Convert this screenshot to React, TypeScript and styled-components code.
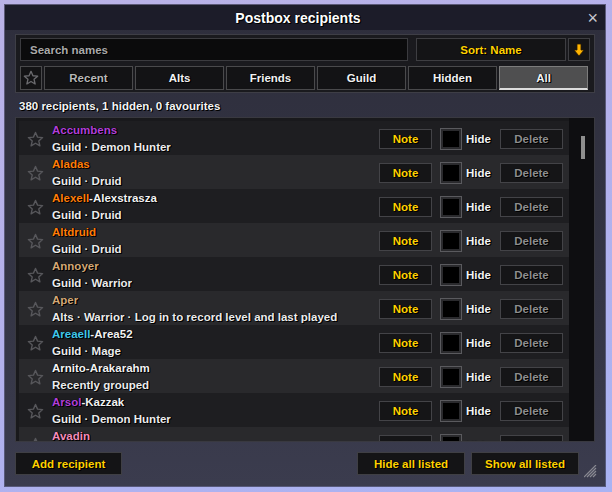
import React from "react";
import styled, { createGlobalStyle, css } from "styled-components";

const Global = createGlobalStyle`
  html, body { margin: 0; padding: 0; }
  body {
    background: linear-gradient(160deg, #bab2e6 0%, #b3b1ec 50%, #a9b3f3 100%);
    font-family: "Liberation Sans", Arial, sans-serif;
  }
  * { box-sizing: border-box; }
`;

const Page = styled.div`
  width: 612px;
  height: 492px;
  padding: 5px 0 0 5px;
`;

const Window = styled.div`
  position: relative;
  width: 600px;
  height: 481px;
  display: flex;
  flex-direction: column;
  background: linear-gradient(180deg, #2e2e3c 0%, #343545 60%, #3b3c4e 100%);
  box-shadow: 0 0 0 1px rgba(30, 30, 45, 0.6);
`;

const TitleBar = styled.div`
  position: relative;
  height: 25px;
  flex: none;
  display: flex;
  align-items: center;
  justify-content: center;
  padding-right: 14px;
  background: #1c1c29;
`;

const outline = css`
  text-shadow: 1px 1px 0 #000, 0 0 1px #000, 1px 0 0 #000;
`;

const Title = styled.div`
  color: #ffffff;
  font-weight: bold;
  font-size: 14px;
  padding-top: 1px;
  ${outline};
`;

const Close = styled.div`
  position: absolute;
  right: 7px;
  top: 3px;
  color: #c8c8d0;
  font-size: 18px;
  line-height: 20px;
`;

const Body = styled.div`
  flex: 1;
  display: flex;
  flex-direction: column;
  padding: 4px 10px 10px 10px;
`;

const TopPanel = styled.div`
  border: 1px solid #3e3e46;
  background: #1a1a1e;
  padding: 3px 4px 2px 4px;
  display: flex;
  flex-direction: column;
  gap: 5px;
`;

const SearchRow = styled.div`
  display: flex;
  height: 23px;
`;

const SearchBox = styled.div`
  width: 388px;
  background: #0b0b0c;
  border: 1px solid #3b3b3f;
  color: #a9a9a9;
  font-size: 11.5px;
  font-weight: bold;
  display: flex;
  align-items: center;
  padding-left: 9px;
  ${outline};
`;

const SortButton = styled.div`
  margin-left: 8px;
  width: 150px;
  background: #141416;
  border: 1px solid #3e3e42;
  color: #ffd100;
  font-size: 11.5px;
  font-weight: bold;
  display: flex;
  align-items: center;
  justify-content: center;
  ${outline};
`;

const ArrowButton = styled.div`
  margin-left: 2px;
  width: 22px;
  background: #141416;
  border: 1px solid #3e3e42;
  display: flex;
  align-items: center;
  justify-content: center;
`;

const TabRow = styled.div`
  display: flex;
  gap: 2px;
  height: 24px;
`;

const Tab = styled.div<{ $active?: boolean; $dim?: boolean; $w: number }>`
  width: ${(p) => p.$w}px;
  background: ${(p) => (p.$active ? "#4f4f50" : "#131315")};
  border: 1px solid ${(p) => (p.$active ? "#7c7c7c" : "#4a4a4c")};
  border-bottom: ${(p) => (p.$active ? "2px solid #dcdcdc" : "1px solid #4a4a4c")};
  color: ${(p) => (p.$dim ? "#b8b8b8" : "#f2f2f2")};
  font-size: 11.5px;
  font-weight: bold;
  display: flex;
  align-items: center;
  justify-content: center;
  ${outline};
`;

const Status = styled.div`
  height: 24px;
  flex: none;
  padding: 2px 0 0 4px;
  display: flex;
  align-items: center;
  color: #f4f4f4;
  font-size: 11.5px;
  font-weight: bold;
  ${outline};
`;

const ListBox = styled.div`
  height: 325px;
  flex: none;
  border: 1px solid #393940;
  display: flex;
  background: #19191c;
`;

const RowsArea = styled.div`
  flex: 1;
  padding: 3px 0 3px 3px;
  overflow: hidden;
  display: flex;
  flex-direction: column;
`;

const Row = styled.div<{ $alt: boolean }>`
  height: 34px;
  flex: none;
  display: flex;
  align-items: center;
  padding-right: 6px;
  background: ${(p) => (p.$alt ? "#29292c" : "#1e1e21")};
`;

const StarCell = styled.div`
  width: 33px;
  flex: none;
  display: flex;
  align-items: center;
  padding-left: 8px;
  padding-top: 2px;
`;

const Info = styled.div`
  flex: 1;
  align-self: stretch;
  display: flex;
  flex-direction: column;
  font-size: 11.5px;
  font-weight: bold;
  line-height: 17px;
  padding-top: 1px;
  ${outline};
`;

const NameLine = styled.div`
  color: #f2f2f2;
  white-space: nowrap;
`;

const Name = styled.span<{ $c: string }>`
  color: ${(p) => p.$c};
`;

const SubLine = styled.div`
  color: #ececec;
  white-space: nowrap;
`;

const NoteButton = styled.div`
  width: 53px;
  height: 20px;
  margin-top: 2px;
  background: #151517;
  border: 1px solid #434347;
  color: #ffd100;
  font-size: 11.5px;
  font-weight: bold;
  display: flex;
  align-items: center;
  justify-content: center;
  ${outline};
`;

const Check = styled.div`
  width: 22px;
  height: 22px;
  margin: 2px 0 0 8px;
  border: 1px solid #5a5a5e;
  background: #2a2a2d;
  padding: 2px;
  display: flex;
`;

const CheckInner = styled.div`
  flex: 1;
  background: #000;
`;

const HideLabel = styled.div`
  width: 34px;
  margin: 2px 0 0 4px;
  color: #f4f4f4;
  font-size: 11.5px;
  font-weight: bold;
  ${outline};
`;

const DeleteButton = styled.div`
  width: 63px;
  height: 20px;
  margin-top: 2px;
  background: #151517;
  border: 1px solid #434347;
  color: #8e8e8e;
  font-size: 11.5px;
  font-weight: bold;
  display: flex;
  align-items: center;
  justify-content: center;
  ${outline};
`;

const ScrollTrack = styled.div`
  width: 25px;
  flex: none;
  background: #0e0e11;
  padding: 18px 0 0 12px;
`;

const Thumb = styled.div`
  width: 4px;
  height: 23px;
  background: #8e8e8e;
`;

const BottomBar = styled.div`
  margin-top: 10px;
  height: 23px;
  display: flex;
  gap: 6px;
  padding-right: 16px;
`;

const ActionButton = styled.div<{ $w: number }>`
  width: ${(p) => p.$w}px;
  background: #141416;
  border: 1px solid #3f3f44;
  color: #ffd100;
  font-size: 11.5px;
  font-weight: bold;
  display: flex;
  align-items: center;
  justify-content: center;
  ${outline};
`;

const Spacer = styled.div`
  flex: 1;
`;

const Grip = styled.svg`
  position: absolute;
  right: 8px;
  bottom: 8px;
`;

const Star: React.FC<{ size?: number; color?: string }> = ({ size = 17, color = "#57575b" }) => (
  <svg width={size} height={size} viewBox="0 0 24 24">
    <polygon
      points="12,2 14.9,8.6 22,9.3 16.6,14 18.2,21 12,17.3 5.8,21 7.4,14 2,9.3 9.1,8.6"
      fill="none"
      stroke={color}
      strokeWidth="2"
      strokeLinejoin="round"
    />
  </svg>
);

const DownArrow = () => (
  <svg width="12" height="14" viewBox="0 0 12 14">
    <path d="M4 1 H8 V7 H11 L6 13 L1 7 H4 Z" fill="#ffb400" stroke="#2a1a00" strokeWidth="0.8" />
  </svg>
);

type Entry = { name: string; color: string; realm?: string; sub: string };

const entries: Entry[] = [
  { name: "Accumbens", color: "#b13fd8", sub: "Guild · Demon Hunter" },
  { name: "Aladas", color: "#ff7d0a", sub: "Guild · Druid" },
  { name: "Alexell", color: "#ff7d0a", realm: "-Alexstrasza", sub: "Guild · Druid" },
  { name: "Altdruid", color: "#ff7d0a", sub: "Guild · Druid" },
  { name: "Annoyer", color: "#d3a877", sub: "Guild · Warrior" },
  { name: "Aper", color: "#d3a877", sub: "Alts · Warrior · Log in to record level and last played" },
  { name: "Areaell", color: "#40c7eb", realm: "-Area52", sub: "Guild · Mage" },
  { name: "Arnito", color: "#f4f4f4", realm: "-Arakarahm", sub: "Recently grouped" },
  { name: "Arsol", color: "#b13fd8", realm: "-Kazzak", sub: "Guild · Demon Hunter" },
  { name: "Avadin", color: "#f58cba", sub: "Guild · Paladin" },
];

const tabs = ["Recent", "Alts", "Friends", "Guild", "Hidden", "All"];

export default function App() {
  return (
    <>
      <Global />
      <Page>
        <Window>
          <TitleBar>
            <Title>Postbox recipients</Title>
            <Close>×</Close>
          </TitleBar>
          <Body>
            <TopPanel>
              <SearchRow>
                <SearchBox>Search names</SearchBox>
                <SortButton>Sort: Name</SortButton>
                <ArrowButton>
                  <DownArrow />
                </ArrowButton>
              </SearchRow>
              <TabRow>
                <Tab $w={22}>
                  <Star size={16} color="#6a6a6e" />
                </Tab>
                {tabs.map((t) => (
                  <Tab key={t} $w={89} $active={t === "All"} $dim={t === "Recent"}>
                    {t}
                  </Tab>
                ))}
              </TabRow>
            </TopPanel>
            <Status>380 recipients, 1 hidden, 0 favourites</Status>
            <ListBox>
              <RowsArea>
                {entries.map((e, i) => (
                  <Row key={e.name} $alt={i % 2 === 1}>
                    <StarCell>
                      <Star />
                    </StarCell>
                    <Info>
                      <NameLine>
                        <Name $c={e.color}>{e.name}</Name>
                        {e.realm}
                      </NameLine>
                      <SubLine>{e.sub}</SubLine>
                    </Info>
                    <NoteButton>Note</NoteButton>
                    <Check>
                      <CheckInner />
                    </Check>
                    <HideLabel>Hide</HideLabel>
                    <DeleteButton>Delete</DeleteButton>
                  </Row>
                ))}
              </RowsArea>
              <ScrollTrack>
                <Thumb />
              </ScrollTrack>
            </ListBox>
            <BottomBar>
              <ActionButton $w={107}>Add recipient</ActionButton>
              <Spacer />
              <ActionButton $w={108}>Hide all listed</ActionButton>
              <ActionButton $w={108}>Show all listed</ActionButton>
            </BottomBar>
          </Body>
          <Grip width="13" height="13" viewBox="0 0 13 13">
            <path d="M12 3 L3 12 M12 6 L6 12 M12 9 L9 12 M12 0 L0 12" stroke="#8a8a92" strokeWidth="1.2" />
          </Grip>
        </Window>
      </Page>
    </>
  );
}
